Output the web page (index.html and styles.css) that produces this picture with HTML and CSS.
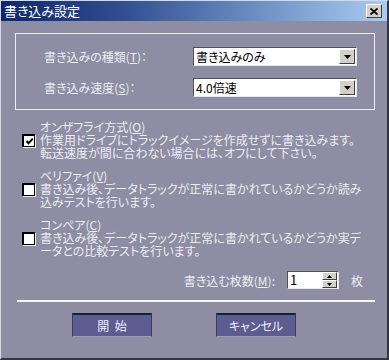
FILE: index.html
```html
<!DOCTYPE html>
<html lang="ja">
<head>
<meta charset="utf-8">
<title>書き込み設定</title>
<link rel="stylesheet" href="styles.css">
</head>
<body>
<div class="window">
  <div class="titlebar">
    <span class="title">書き込み設定</span>
    <span class="close"><svg width="8" height="7" viewBox="0 0 8 7"><path d="M0.5 0.5 L7.5 6.5 M7.5 0.5 L0.5 6.5" stroke="#000" stroke-width="1.8" fill="none"/></svg></span>
  </div>
  <div class="body">
    <div class="group">
      <div class="field-label">書き込みの種類(<u>T</u>)：</div>
      <div class="select"><span class="select-text">書き込みのみ</span><span class="select-btn"><svg width="7" height="4" viewBox="0 0 7 4"><path d="M0 0 H7 L3.5 4 Z" fill="#000"/></svg></span></div>
      <div class="field-label">書き込み速度(<u>S</u>)：</div>
      <div class="select"><span class="select-text">4.0倍速</span><span class="select-btn"><svg width="7" height="4" viewBox="0 0 7 4"><path d="M0 0 H7 L3.5 4 Z" fill="#000"/></svg></span></div>
    </div>

    <div class="options">
      <div class="option">
        <span class="check"><svg width="9" height="9" viewBox="0 0 9 9"><path d="M1.5 4 L3.5 6.2 L7.8 1.6" stroke="#000" stroke-width="2" fill="none"/></svg></span>
        <div class="option-text">
          <div class="line">オンザフライ方式(<u>O</u>)</div>
          <div class="line">作業用ドライブにトラックイメージを作成せずに書き込みます。</div>
          <div class="line">転送速度が間に合わない場合には、オフにして下さい。</div>
        </div>
      </div>
      <div class="option">
        <span class="check"></span>
        <div class="option-text">
          <div class="line">ベリファイ(<u>V</u>)</div>
          <div class="line">書き込み後、データトラックが正常に書かれているかどうか読み</div>
          <div class="line">込みテストを行います。</div>
        </div>
      </div>
      <div class="option">
        <span class="check"></span>
        <div class="option-text">
          <div class="line">コンペア(<u>C</u>)</div>
          <div class="line">書き込み後、データトラックが正常に書かれているかどうか実デ</div>
          <div class="line">ータとの比較テストを行います。</div>
        </div>
      </div>
    </div>

    <div class="count-row">
      <span class="count-label">書き込む枚数(<u>M</u>):</span>
      <span class="spin">
        <span class="spin-text">1</span>
        <span class="spin-btns">
          <span class="spin-btn"><svg width="5" height="3" viewBox="0 0 5 3"><path d="M0 3 H5 L2.5 0 Z" fill="#000"/></svg></span>
          <span class="spin-btn"><svg width="5" height="3" viewBox="0 0 5 3"><path d="M0 0 H5 L2.5 3 Z" fill="#000"/></svg></span>
        </span>
      </span>
      <span class="count-unit">枚</span>
    </div>

    <div class="sep"></div>

    <div class="buttons">
      <button class="btn">開&nbsp;&nbsp;始</button>
      <button class="btn">キャンセル</button>
    </div>
  </div>
</div>
</body>
</html>
```

FILE: styles.css
```css
* { box-sizing: border-box; }

html, body {
  margin: 0;
  padding: 0;
  background: #8e8da3;
}

body {
  font-family: "Noto Sans CJK JP", "Noto Sans", sans-serif;
  font-size: 12px;
  font-feature-settings: "palt";
  color: #ececf6;
}

.window {
  width: 389px;
  height: 360px;
  background: #8e8da3;
  border-top: 1px solid #d8d8e0;
  border-left: 1px solid #d8d8e0;
  border-right: 2px solid #36363e;
  border-bottom: 2px solid #36363e;
  display: flex;
  flex-direction: column;
}

.titlebar {
  height: 20px;
  flex: none;
  display: flex;
  align-items: center;
  justify-content: space-between;
  padding: 0 5px 0 3px;
  background: linear-gradient(to right, #0e266a 0%, #2e4c8e 30%, #a8ccf2 100%);
}

.title {
  color: #fff;
  font-size: 13px;
  line-height: 20px;
}

.close {
  width: 16px;
  height: 14px;
  display: flex;
  align-items: center;
  justify-content: center;
  background: #d4d0c8;
  border-top: 1px solid #fff;
  border-left: 1px solid #fff;
  border-right: 1px solid #404040;
  border-bottom: 1px solid #404040;
}

.body {
  flex: 1;
  padding: 12px 12px 0 14px;
  display: flex;
  flex-direction: column;
}

.group {
  border: 1px solid #eeeef6;
  padding: 13px 17px 12px 28px;
  display: grid;
  grid-template-columns: 1fr 164px;
  row-gap: 12px;
  align-items: center;
}

.field-label {
  line-height: 19px;
  white-space: nowrap;
}

.select {
  height: 19px;
  background: #fff;
  border-top: 1px solid #505058;
  border-left: 1px solid #505058;
  border-right: 1px solid #e8e8f0;
  border-bottom: 1px solid #e8e8f0;
  display: flex;
  align-items: center;
  justify-content: space-between;
  padding: 0 1px 0 2px;
}

.select-text {
  color: #000;
  line-height: 17px;
  white-space: nowrap;
}

.select-btn {
  width: 16px;
  height: 15px;
  display: flex;
  align-items: center;
  justify-content: center;
  background: #d4d0c8;
  border-top: 1px solid #fff;
  border-left: 1px solid #fff;
  border-right: 1px solid #404040;
  border-bottom: 1px solid #404040;
}

.options {
  margin-top: 10px;
  display: flex;
  flex-direction: column;
  gap: 10px;
}

.option {
  display: flex;
  align-items: flex-start;
  gap: 5px;
  padding-left: 7px;
}

.check {
  width: 13px;
  height: 13px;
  margin-top: 14px;
  flex: none;
  background: #fff;
  border-top: 2px solid #000;
  border-left: 2px solid #000;
  border-right: 1px solid #000;
  border-bottom: 1px solid #000;
  box-shadow: 1px 1px 0 #e8e8f0;
  display: flex;
  align-items: center;
  justify-content: center;
}

.option-text {
  display: flex;
  flex-direction: column;
}

.line {
  height: 13px;
  line-height: 13px;
  white-space: nowrap;
}

.count-row {
  margin-top: 14px;
  display: flex;
  justify-content: flex-end;
  align-items: center;
  gap: 12px;
  padding-right: 12px;
}

.count-label {
  white-space: nowrap;
}

.spin {
  width: 52px;
  height: 18px;
  background: #fff;
  border-top: 1px solid #505058;
  border-left: 1px solid #505058;
  border-right: 1px solid #e8e8f0;
  border-bottom: 1px solid #e8e8f0;
  display: flex;
  justify-content: space-between;
  padding: 0 1px 0 2px;
}

.spin-text {
  color: #000;
  font-size: 13px;
  line-height: 16px;
}

.spin-btns {
  display: flex;
  flex-direction: column;
}

.spin-btn {
  width: 15px;
  height: 8px;
  display: flex;
  align-items: center;
  justify-content: center;
  background: #d4d0c8;
  border-top: 1px solid #fff;
  border-left: 1px solid #fff;
  border-right: 1px solid #404040;
  border-bottom: 1px solid #404040;
}

.sep {
  margin-top: 11px;
  height: 2px;
  margin-left: 2px;
  background: #f4f4fa;
}

.buttons {
  margin-top: 11px;
  display: flex;
  gap: 64px;
  padding-left: 57px;
}

.btn {
  width: 80px;
  height: 24px;
  font-family: inherit;
  font-size: 12px;
  font-feature-settings: "palt";
  color: #f0f0ff;
  background: #5c5c90;
  border: none;
  border-top: 2px solid #1e1e3a;
  border-left: 1px solid #3a3a62;
  border-right: 1px solid #3a3a62;
  border-bottom: 1px solid #9a9abc;
  padding: 0;
}
```
